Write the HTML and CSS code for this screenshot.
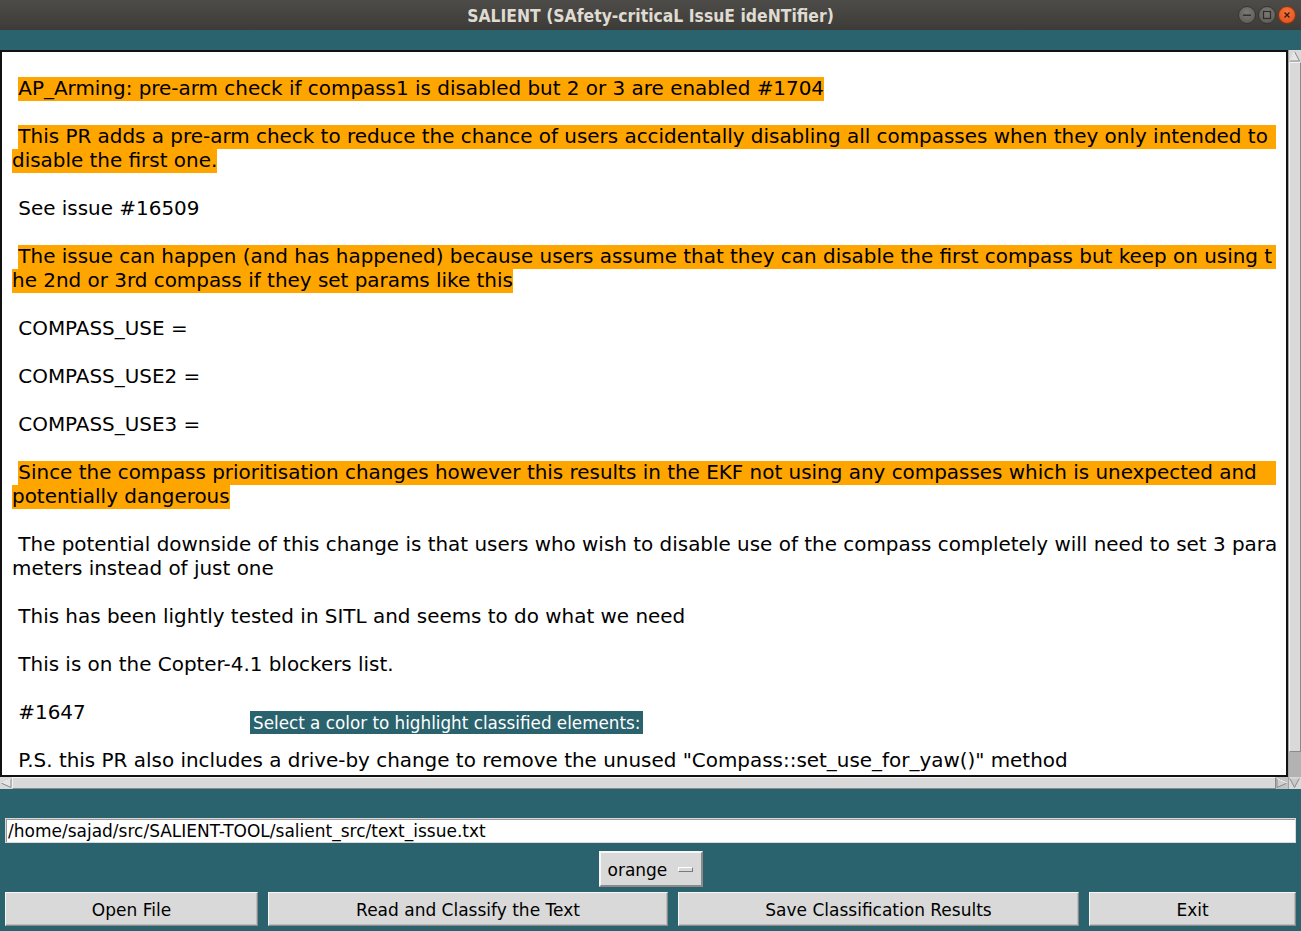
FILE: index.html
```html
<!DOCTYPE html>
<html>
<head>
<meta charset="utf-8">
<title>SALIENT</title>
<link rel="stylesheet" href="styles.css">
</head>
<body>
<div class="window">
  <div class="titlebar">
    <div class="tb-spacer"></div>
    <div class="tb-title">SALIENT (SAfety-criticaL IssuE ideNTifier)</div>
    <div class="tb-controls">
      <span class="wbtn wmin"><svg width="10" height="10" viewBox="0 0 10 10"><rect x="1" y="4.5" width="8" height="1.4" fill="#2e2d2a"/></svg></span>
      <span class="wbtn wmax"><svg width="10" height="10" viewBox="0 0 10 10"><rect x="1.5" y="1.5" width="7" height="7" fill="none" stroke="#2e2d2a" stroke-width="1.2"/></svg></span>
      <span class="wbtn wclose"><svg width="10" height="10" viewBox="0 0 10 10"><path d="M2.5 2.5 L7.5 7.5 M7.5 2.5 L2.5 7.5" stroke="#3a1a0c" stroke-width="1.4"/></svg></span>
    </div>
  </div>

  <div class="content">
    <div class="editor">
      <div class="text">
        <div class="ln"> </div>
        <div class="ln"> <span class="hl">AP_Arming: pre-arm check if compass1 is disabled but 2 or 3 are enabled #1704</span></div>
        <div class="ln"> </div>
        <div class="ln wrap"><span> </span><span class="hl fill">This PR adds a pre-arm check to reduce the chance of users accidentally disabling all compasses when they only intended to </span></div>
        <div class="ln"><span class="hl">disable the first one.</span></div>
        <div class="ln"> </div>
        <div class="ln"> See issue #16509</div>
        <div class="ln"> </div>
        <div class="ln wrap"><span> </span><span class="hl fill">The issue can happen (and has happened) because users assume that they can disable the first compass but keep on using t</span></div>
        <div class="ln"><span class="hl">he 2nd or 3rd compass if they set params like this</span></div>
        <div class="ln"> </div>
        <div class="ln"> COMPASS_USE =</div>
        <div class="ln"> </div>
        <div class="ln"> COMPASS_USE2 =</div>
        <div class="ln"> </div>
        <div class="ln"> COMPASS_USE3 =</div>
        <div class="ln"> </div>
        <div class="ln wrap"><span> </span><span class="hl fill">Since the compass prioritisation changes however this results in the EKF not using any compasses which is unexpected and </span></div>
        <div class="ln"><span class="hl">potentially dangerous</span></div>
        <div class="ln"> </div>
        <div class="ln"> The potential downside of this change is that users who wish to disable use of the compass completely will need to set 3 para</div>
        <div class="ln">meters instead of just one</div>
        <div class="ln"> </div>
        <div class="ln"> This has been lightly tested in SITL and seems to do what we need</div>
        <div class="ln"> </div>
        <div class="ln"> This is on the Copter-4.1 blockers list.</div>
        <div class="ln"> </div>
        <div class="ln"> #1647</div>
        <div class="ln"> </div>
        <div class="ln"> P.S. this PR also includes a drive-by change to remove the unused "Compass::set_use_for_yaw()" method</div>
      </div>
      <div class="vscroll">
        <span class="arrow"><svg width="13" height="12" viewBox="0 0 13 12"><polygon points="6.5,1.5 11.5,11 1.5,11" fill="#e6e6e6" stroke="#8a8a8a" stroke-width="1"/><polyline points="1.5,11 6.5,1.5" fill="none" stroke="#ffffff" stroke-width="1"/></svg></span>
        <span class="vslider"></span>
        <span class="vtrough"></span>
        <span class="arrow"><svg width="13" height="12" viewBox="0 0 13 12"><polygon points="1.5,1 11.5,1 6.5,10.5" fill="#c9c9c9" stroke="#8a8a8a" stroke-width="1"/><polyline points="1.5,1 11.5,1" fill="none" stroke="#ffffff" stroke-width="1"/></svg></span>
      </div>
      <div class="hscroll">
        <span class="harrow"><svg width="12" height="12" viewBox="0 0 12 12"><polygon points="1,6 11,1.5 11,10.5" fill="#e6e6e6" stroke="#8a8a8a" stroke-width="1"/><polyline points="1,6 11,1.5" fill="none" stroke="#ffffff" stroke-width="1"/></svg></span>
        <span class="hslider"></span>
        <span class="harrow dark"><svg width="12" height="12" viewBox="0 0 12 12"><polygon points="1,1.5 11,6 1,10.5" fill="#cfcfcf" stroke="#8a8a8a" stroke-width="1"/><polyline points="1,1.5 11,6" fill="none" stroke="#ffffff" stroke-width="1"/></svg></span>
      </div>
      <div class="hint">Select a color to highlight classified elements:</div>
    </div>

    <div class="entry">/home/sajad/src/SALIENT-TOOL/salient_src/text_issue.txt</div>

    <div class="optrow">
      <div class="optmenu"><span>orange</span><span class="indicator"></span></div>
    </div>

    <div class="buttons">
      <div class="btn b1">Open File</div>
      <div class="btn b2">Read and Classify the Text</div>
      <div class="btn b3">Save Classification Results</div>
      <div class="btn b4">Exit</div>
    </div>
  </div>
</div>
</body>
</html>
```

FILE: styles.css
```css
* { box-sizing: border-box; }
html, body { margin: 0; padding: 0; }
body {
  width: 1301px;
  height: 931px;
  overflow: hidden;
  background: #2a636e;
  font-family: "DejaVu Sans", sans-serif;
}
.window { width: 1301px; height: 931px; display: flex; flex-direction: column; }

.titlebar {
  height: 30px;
  background: linear-gradient(#4d4c48, #3c3b37);
  display: grid;
  grid-template-columns: 1fr auto 1fr;
  align-items: center;
}
.tb-title {
  color: #dfdbd2;
  font-family: "DejaVu Sans Condensed", "DejaVu Sans", sans-serif;
  font-weight: bold;
  font-size: 17.4px;
  padding-top: 1px;
}
.tb-controls { justify-self: end; display: flex; gap: 2px; padding-right: 5px; }
.wbtn {
  width: 18px; height: 18px; border-radius: 50%;
  display: flex; align-items: center; justify-content: center;
  background: radial-gradient(circle at 50% 35%, #7b7a75, #57564f);
  border: 1px solid #36352f;
}
.wclose { background: radial-gradient(circle at 50% 35%, #f5763f, #df4a14); border-color: #8d3210; }

.content { padding-top: 20px; display: flex; flex-direction: column; }

.editor {
  position: relative;
  display: grid;
  grid-template-columns: 1288px 13px;
  grid-template-rows: 727px 12px;
}
.text {
  grid-column: 1; grid-row: 1;
  background: #fff;
  border: 2px solid #111;
  padding: 1px 10px;
  overflow: hidden;
  font-size: 19.93px;
  color: #000;
}
.ln { height: 24px; line-height: 24px; white-space: pre; }
.ln.wrap { display: flex; }
.hl { background: #ffa500; display: inline-block; height: 24px; }
.fill { flex: 1; }

.vscroll {
  grid-column: 2; grid-row: 1 / 3;
  background: #b9b9b9;
  display: flex; flex-direction: column;
  border-left: 1px solid #a3a3a3;
}
.arrow { height: 12px; display: block; background: #d9d9d9; }
.arrow svg { display: block; margin-left: -1px; }
.vslider {
  height: 690px;
  background: #d9d9d9;
  border-top: 1px solid #f4f4f4;
  border-left: 1px solid #f4f4f4;
  border-bottom: 1px solid #8a8a8a;
  border-right: 1px solid #8a8a8a;
}
.vtrough { flex: 1; background: #b3b3b3; }

.hscroll {
  grid-column: 1; grid-row: 2;
  background: #b3b3b3;
  display: flex;
}
.harrow { width: 12px; height: 12px; display: block; background: #d9d9d9; }
.harrow.dark { background: #c3c3c3; }
.harrow svg { display: block; }
.hslider {
  flex: 1;
  background: #d9d9d9;
  border-top: 1px solid #f4f4f4;
  border-left: 1px solid #f4f4f4;
  border-bottom: 1px solid #8a8a8a;
  border-right: 1px solid #8a8a8a;
}

.hint {
  position: absolute;
  left: 250px; top: 661px;
  height: 23px;
  padding: 1px 3px 0 3px;
  background: #2a636e;
  color: #fff;
  font-size: 16.8px;
  line-height: 22px;
  white-space: nowrap;
}

.entry {
  margin: 29px 5px 0 5px;
  height: 25px;
  background: #fff;
  border: 1px solid #d9d9d9;
  box-shadow: inset 1px 1px 0 #9a9a9a;
  padding: 1px 0 0 2px;
  font-size: 17px;
  line-height: 22px;
  color: #000;
  white-space: nowrap;
}

.optrow { margin-top: 8px; display: flex; justify-content: center; }
.optmenu {
  width: 104px; height: 36px;
  background: #d9d9d9;
  border: 2px solid;
  border-color: #f7f7f7 #8a8a8a #8a8a8a #f7f7f7;
  display: flex; align-items: center;
  padding: 2px 0 0 7px;
  font-size: 17px;
  color: #000;
}
.indicator {
  margin-left: 11px;
  margin-top: -2px;
  width: 15px; height: 5px;
  background: #d9d9d9;
  border: 1px solid;
  border-color: #ffffff #7a7a7a #7a7a7a #ffffff;
}

.buttons {
  margin-top: 5px;
  padding: 0 5px;
  display: flex;
  gap: 10px;
}
.btn {
  height: 34px;
  padding-top: 2px;
  background: #d9d9d9;
  border: 1px solid;
  border-color: #f7f7f7 #8a8a8a #8a8a8a #f7f7f7;
  box-shadow: inset -1px -1px 0 #bdbdbd;
  display: flex; align-items: center; justify-content: center;
  font-size: 17px;
  color: #000;
}
.b1 { width: 253px; }
.b2 { width: 400px; }
.b3 { width: 401px; }
.b4 { width: 207px; }
```
